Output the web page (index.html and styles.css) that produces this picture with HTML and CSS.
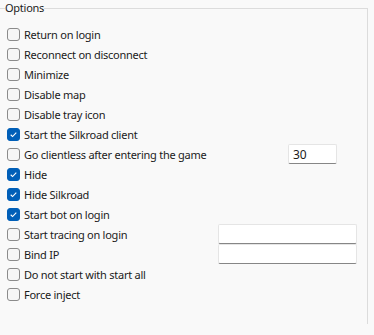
FILE: index.html
```html
<!DOCTYPE html>
<html lang="en">
<head>
  <meta charset="UTF-8">
  <title>Options</title>
  <link rel="stylesheet" href="styles.css">
</head>
<body>
  <fieldset class="group">
    <legend>Options</legend>
    <div class="row"><span class="box"></span>Return on login</div>
    <div class="row"><span class="box"></span>Reconnect on disconnect</div>
    <div class="row"><span class="box"></span>Minimize</div>
    <div class="row"><span class="box"></span>Disable map</div>
    <div class="row"><span class="box"></span>Disable tray icon</div>
    <div class="row"><span class="box checked"><svg viewBox="0 0 13 13"><path d="M3.2 6.8l2.2 2.1 4.4-4.6"/></svg></span>Start the Silkroad client</div>
    <div class="row"><span class="box"></span>Go clientless after entering the game<input class="field small" value="30"></div>
    <div class="row"><span class="box checked"><svg viewBox="0 0 13 13"><path d="M3.2 6.8l2.2 2.1 4.4-4.6"/></svg></span>Hide</div>
    <div class="row"><span class="box checked"><svg viewBox="0 0 13 13"><path d="M3.2 6.8l2.2 2.1 4.4-4.6"/></svg></span>Hide Silkroad</div>
    <div class="row"><span class="box checked"><svg viewBox="0 0 13 13"><path d="M3.2 6.8l2.2 2.1 4.4-4.6"/></svg></span>Start bot on login</div>
    <div class="row"><span class="box"></span>Start tracing on login<input class="field wide"></div>
    <div class="row"><span class="box"></span>Bind IP<input class="field wide"></div>
    <div class="row"><span class="box"></span>Do not start with start all</div>
    <div class="row"><span class="box"></span>Force inject</div>
  </fieldset>
</body>
</html>
```

FILE: styles.css
```css
body {
  margin: 0;
  background-color: #f9f9f9;
  font-family: 'Noto Sans', sans-serif;
  font-size: 11px;
  letter-spacing: -0.25px;
  color: #1b1b1b;
  height: 335px;
  overflow: hidden;
}
.group {
  margin: 1px 0 0 0;
  width: 368px;
  box-sizing: border-box;
  padding: 9px 0 20px 5px;
  border: 1px solid #dcdcdc;
  border-left: none;
  border-bottom: none;
}
.group legend {
  padding: 0;
  line-height: 14px;
}
.row {
  display: flex;
  align-items: center;
  height: 20px;
  padding-left: 2px;
}
.box {
  width: 13px;
  height: 13px;
  box-sizing: border-box;
  border: 1px solid #8b8b8b;
  border-radius: 3px;
  background-color: #f6f6f6;
  margin-right: 4px;
  flex: none;
}
.box.checked {
  background-color: #005fb8;
  border-color: #005fb8;
}
.box svg {
  display: block;
  width: 11px;
  height: 11px;
  fill: none;
  stroke: #fff;
  stroke-width: 1.3;
}
.field {
  height: 20px;
  box-sizing: border-box;
  margin-left: auto;
  border: 1px solid #e5e5e5;
  border-bottom-color: #868686;
  border-radius: 2px;
  background-color: #fff;
  font-family: inherit;
  font-size: 12px;
  padding: 0 4px;
  color: #1b1b1b;
}
.small {
  width: 49px;
  margin-right: 30px;
}
.wide {
  width: 139px;
  margin-right: 10px;
}
```
